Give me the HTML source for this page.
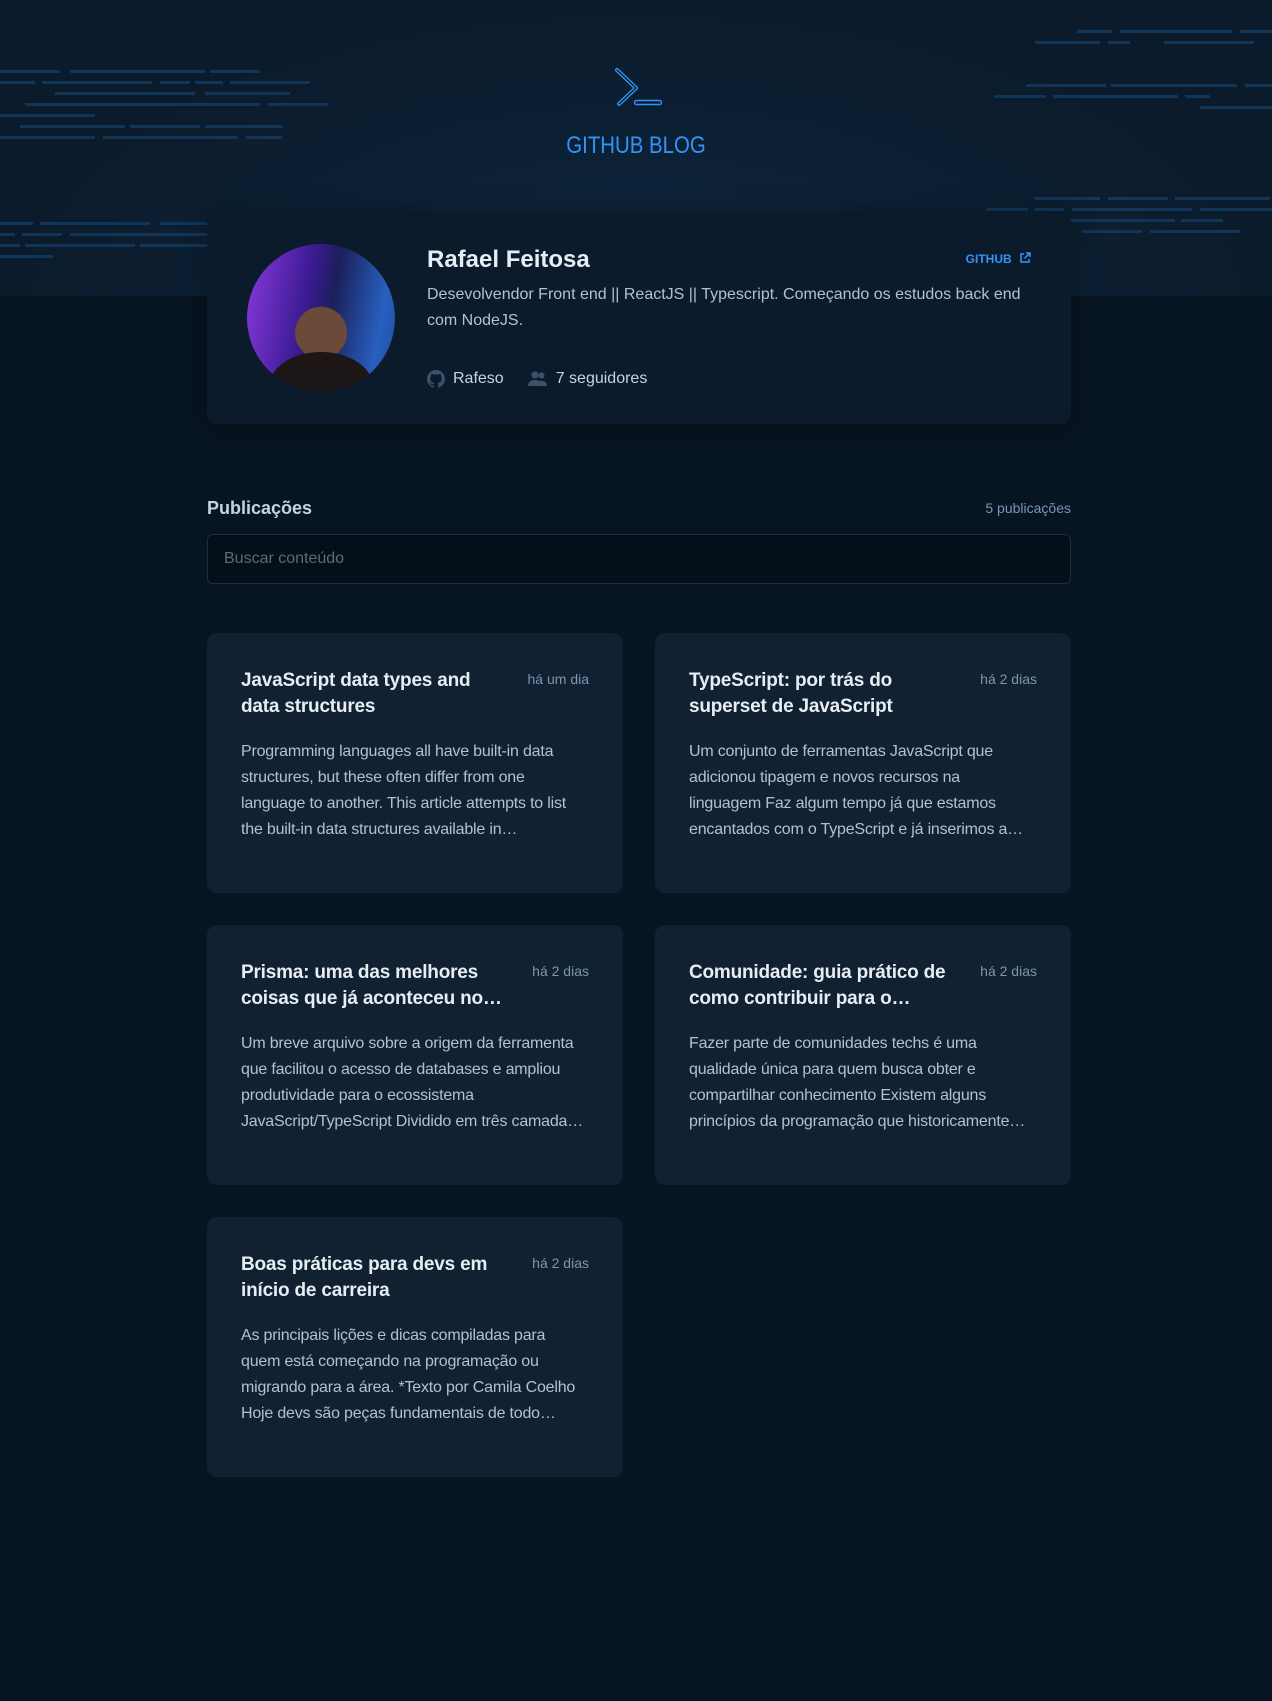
<!DOCTYPE html>
<html><head><meta charset="utf-8"><style>
*{margin:0;padding:0;box-sizing:border-box}
body{width:1272px;height:1701px;background:#071422;font-family:"Liberation Sans",sans-serif;position:relative;overflow:hidden}
.hdr{position:absolute;left:0;top:0;width:1272px;height:296px;background:radial-gradient(ellipse at 50% 100%,#0e2740 0%,#0b1b2b 70%)}
.ln{position:absolute;height:3px;background:#14406b;opacity:.7}
.title{position:absolute;top:132px;left:0;width:1272px;text-align:center;color:#3294f8;font-size:24px;letter-spacing:0}
.title span{display:inline-block;transform:scaleX(.85)}
.prof{position:absolute;left:207px;top:212px;width:864px;height:212px;background:#0b1b2b;border-radius:10px;box-shadow:0 2px 28px rgba(0,0,0,.3)}
.av{position:absolute;left:40px;top:32px;width:148px;height:148px;border-radius:50%;background:radial-gradient(circle at 50% 60%,#6b4a3a 0 22%,transparent 23%),linear-gradient(100deg,#8a3be0,#3a1a90 40%,#1b1f5a 55%,#2860c0 85%,#1a4aa0);overflow:hidden}
.av:after{content:"";position:absolute;left:22px;bottom:-30px;width:104px;height:70px;border-radius:50%;background:#1c1616}
.name{position:absolute;left:220px;top:34px;color:#e7edf4;font-size:24px;font-weight:bold}
.gh{position:absolute;right:40px;top:40px;color:#3294f8;font-size:12px;font-weight:bold}
.bio{position:absolute;left:220px;top:70px;width:610px;color:#afc2d4;font-size:16px;line-height:26px}
.st{position:absolute;left:220px;top:158px;color:#c4d4e3;font-size:16px;display:flex;align-items:center;gap:8px}
.pub{position:absolute;left:207px;top:498px;color:#c4d4e3;font-size:18px;font-weight:bold}
.cnt{position:absolute;right:201px;top:500px;color:#7b96b2;font-size:14px}
.inp{position:absolute;left:207px;top:534px;width:864px;height:50px;background:#040f1a;border:1px solid #1c2f41;border-radius:6px;color:#5a6b7b;font-size:16px;padding:15px 16px}
.card{position:absolute;width:416px;height:260px;background:#112131;border-radius:10px;padding:0 34px}
.card h3{position:absolute;left:34px;top:35px;white-space:nowrap;color:#e7edf4;font-size:19px;line-height:26px;letter-spacing:-0.2px}
.card .d{position:absolute;right:34px;top:38px;color:#7b96b2;font-size:14px}
.card p{position:absolute;left:34px;top:106px;white-space:nowrap;color:#afc2d4;font-size:16px;line-height:26px;letter-spacing:-0.2px}
</style></head><body>
<div class="hdr">
<div class="ln" style="left:0;top:70px;width:60px"></div><div class="ln" style="left:70px;top:70px;width:135px"></div><div class="ln" style="left:210px;top:70px;width:50px"></div>
<div class="ln" style="left:0;top:81px;width:35px"></div><div class="ln" style="left:42px;top:81px;width:110px"></div><div class="ln" style="left:160px;top:81px;width:30px"></div><div class="ln" style="left:195px;top:81px;width:28px"></div><div class="ln" style="left:230px;top:81px;width:80px"></div>
<div class="ln" style="left:55px;top:92px;width:140px"></div><div class="ln" style="left:205px;top:92px;width:85px"></div>
<div class="ln" style="left:25px;top:103px;width:235px"></div><div class="ln" style="left:268px;top:103px;width:60px"></div>
<div class="ln" style="left:0;top:114px;width:95px"></div>
<div class="ln" style="left:20px;top:125px;width:105px"></div><div class="ln" style="left:130px;top:125px;width:70px"></div><div class="ln" style="left:205px;top:125px;width:78px"></div>
<div class="ln" style="left:0;top:136px;width:95px"></div><div class="ln" style="left:103px;top:136px;width:135px"></div><div class="ln" style="left:246px;top:136px;width:36px"></div>
<div class="ln" style="left:1077px;top:30px;width:35px"></div><div class="ln" style="left:1120px;top:30px;width:112px"></div><div class="ln" style="left:1240px;top:30px;width:32px"></div>
<div class="ln" style="left:1035px;top:41px;width:65px"></div><div class="ln" style="left:1108px;top:41px;width:22px"></div><div class="ln" style="left:1164px;top:41px;width:90px"></div>
<div class="ln" style="left:1026px;top:84px;width:80px"></div><div class="ln" style="left:1111px;top:84px;width:126px"></div><div class="ln" style="left:1245px;top:84px;width:27px"></div>
<div class="ln" style="left:994px;top:95px;width:52px"></div><div class="ln" style="left:1053px;top:95px;width:125px"></div><div class="ln" style="left:1185px;top:95px;width:25px"></div>
<div class="ln" style="left:1200px;top:106px;width:72px"></div>
<div class="ln" style="left:1034px;top:197px;width:66px"></div><div class="ln" style="left:1108px;top:197px;width:60px"></div><div class="ln" style="left:1175px;top:197px;width:95px"></div>
<div class="ln" style="left:986px;top:208px;width:42px"></div><div class="ln" style="left:1034px;top:208px;width:30px"></div><div class="ln" style="left:1072px;top:208px;width:120px"></div><div class="ln" style="left:1200px;top:208px;width:72px"></div>
<div class="ln" style="left:1070px;top:219px;width:105px"></div><div class="ln" style="left:1181px;top:219px;width:42px"></div>
<div class="ln" style="left:1082px;top:230px;width:60px"></div><div class="ln" style="left:1150px;top:230px;width:90px"></div>
<div class="ln" style="left:0;top:222px;width:33px"></div><div class="ln" style="left:40px;top:222px;width:110px"></div><div class="ln" style="left:160px;top:222px;width:47px"></div>
<div class="ln" style="left:0;top:233px;width:15px"></div><div class="ln" style="left:22px;top:233px;width:40px"></div><div class="ln" style="left:70px;top:233px;width:137px"></div>
<div class="ln" style="left:0;top:244px;width:20px"></div><div class="ln" style="left:25px;top:244px;width:110px"></div><div class="ln" style="left:140px;top:244px;width:67px"></div>
<div class="ln" style="left:0;top:255px;width:53px"></div>
<svg style="position:absolute;left:612px;top:66px" width="52" height="42" viewBox="0 0 52 42"><path d="M5 4 L24 22 L7 38" fill="none" stroke="#3294f8" stroke-width="4" stroke-linejoin="round" stroke-linecap="round"/><path d="M5 4 L24 22 L7 38" fill="none" stroke="#0b1b2b" stroke-width="1.4" stroke-linejoin="round" stroke-linecap="round"/><rect x="22.5" y="34.5" width="27" height="4" rx="2" fill="none" stroke="#3294f8" stroke-width="1.4"/></svg>
<div class="title"><span>GITHUB BLOG</span></div>
</div>
<div class="prof">
<div class="av"></div>
<div class="name">Rafael Feitosa</div>
<div class="gh">GITHUB <svg width="12" height="12" viewBox="0 0 12 12" style="vertical-align:-1px;margin-left:4px"><path d="M5 2H2v8h8V7M7 1h4v4M11 1 5.5 6.5" fill="none" stroke="#3294f8" stroke-width="1.5"/></svg></div>
<div class="bio">Desevolvendor Front end || ReactJS || Typescript. Começando os estudos back end com NodeJS.</div>
<div class="st"><svg width="18" height="18" viewBox="0 0 16 16"><path fill="#3a536b" d="M8 0C3.6 0 0 3.6 0 8c0 3.5 2.3 6.5 5.5 7.6.4.1.5-.2.5-.4v-1.4c-2.2.5-2.7-1-2.7-1-.4-.9-.9-1.2-.9-1.2-.7-.5.1-.5.1-.5.8.1 1.2.8 1.2.8.7 1.2 1.9.9 2.3.7.1-.5.3-.9.5-1.1-1.8-.2-3.6-.9-3.6-4 0-.9.3-1.6.8-2.1-.1-.2-.4-1 .1-2.1 0 0 .7-.2 2.2.8.6-.2 1.3-.3 2-.3s1.4.1 2 .3c1.5-1 2.2-.8 2.2-.8.4 1.1.2 1.9.1 2.1.5.6.8 1.3.8 2.1 0 3.1-1.9 3.7-3.6 3.9.3.3.5.8.5 1.5v2.2c0 .2.1.5.6.4C13.7 14.5 16 11.5 16 8c0-4.4-3.6-8-8-8z"/></svg>Rafeso<svg style="margin-left:16px" width="20" height="18" viewBox="0 0 20 18"><circle cx="7" cy="5" r="3.5" fill="#3a536b"/><circle cx="13.5" cy="5.5" r="3" fill="#3a536b"/><path d="M0 16c0-4 3-6 7-6s7 2 7 6z M13 16c0-2-.5-3.5-2-5 4 -1 8 1 8 5z" fill="#3a536b"/></svg>7 seguidores</div>
</div>
<div class="pub">Publicações</div>
<div class="cnt">5 publicações</div>
<div class="inp">Buscar conteúdo</div>

<div class="card" style="left:207px;top:633px"><h3>JavaScript data types and<br>data structures</h3><span class="d">há um dia</span><p>Programming languages all have built-in data<br>structures, but these often differ from one<br>language to another. This article attempts to list<br>the built-in data structures available in…</p></div>
<div class="card" style="left:655px;top:633px"><h3>TypeScript: por trás do<br>superset de JavaScript</h3><span class="d">há 2 dias</span><p>Um conjunto de ferramentas JavaScript que<br>adicionou tipagem e novos recursos na<br>linguagem Faz algum tempo já que estamos<br>encantados com o TypeScript e já inserimos a…</p></div>
<div class="card" style="left:207px;top:925px"><h3>Prisma: uma das melhores<br>coisas que já aconteceu no…</h3><span class="d">há 2 dias</span><p>Um breve arquivo sobre a origem da ferramenta<br>que facilitou o acesso de databases e ampliou<br>produtividade para o ecossistema<br>JavaScript/TypeScript Dividido em três camada…</p></div>
<div class="card" style="left:655px;top:925px"><h3>Comunidade: guia prático de<br>como contribuir para o…</h3><span class="d">há 2 dias</span><p>Fazer parte de comunidades techs é uma<br>qualidade única para quem busca obter e<br>compartilhar conhecimento Existem alguns<br>princípios da programação que historicamente…</p></div>
<div class="card" style="left:207px;top:1217px"><h3>Boas práticas para devs em<br>início de carreira</h3><span class="d">há 2 dias</span><p>As principais lições e dicas compiladas para<br>quem está começando na programação ou<br>migrando para a área. *Texto por Camila Coelho<br>Hoje devs são peças fundamentais de todo…</p></div>
</body></html>
